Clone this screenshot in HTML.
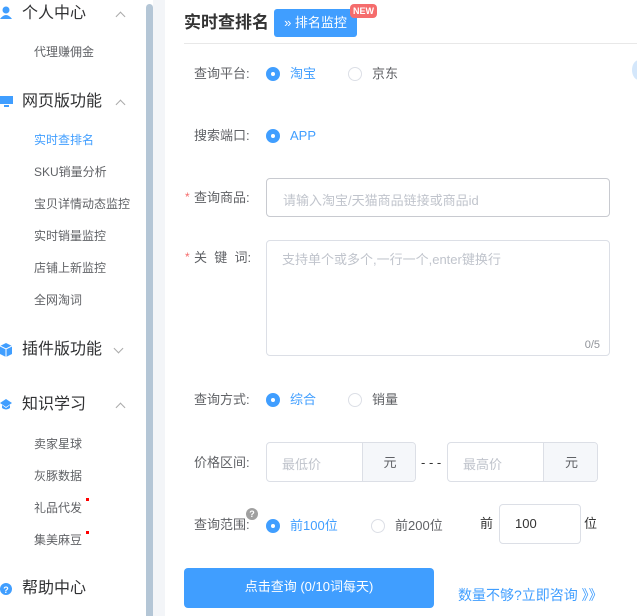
<!DOCTYPE html>
<html><head><meta charset="utf-8"><style>
*{margin:0;padding:0;box-sizing:border-box}
body{width:637px;height:616px;overflow:hidden;background:#fff;font-family:"Liberation Sans","Noto Sans CJK SC",sans-serif;position:relative}
.a{position:absolute;white-space:nowrap}
.g{font-size:16px;color:#303133;line-height:20px}
.s{font-size:12px;color:#606266;line-height:16px;left:34px}
.chev{position:absolute;width:7px;height:7px;border-left:1px solid #aaa;border-top:1px solid #aaa;transform:rotate(45deg)}
.chd{transform:rotate(225deg)}
.lb{font-size:13px;color:#606266;line-height:16px;left:194px}
.r{position:absolute;width:14px;height:14px;border-radius:50%;border:1px solid #dcdfe6;background:#fff}
.r.on{background:#409eff;border-color:#409eff}
.r.on:after{content:"";position:absolute;left:4px;top:4px;width:4px;height:4px;border-radius:50%;background:#fff}
.t{font-size:13px;line-height:16px;color:#606266}
.b{color:#409eff}
.box{position:absolute;border:1px solid #dcdfe6;border-radius:4px;background:#fff}
.ph{font-size:13px;color:#c0c4cc}
.st{color:#f56c6c;font-size:12px;left:185px}
</style></head><body>
<div class="a" style="left:146px;top:4px;width:7px;height:612px;background:#b4c6d6;border-radius:4px 4px 0 0"></div>
<div class="a" style="left:153px;top:0;width:12px;height:616px;background:#f3f5f8"></div>

<svg class="a" style="left:0;top:6px" width="12" height="14"><circle cx="6" cy="4" r="3.5" fill="#409eff"/><path d="M0 13 Q6 5 12 13Z" fill="#409eff"/></svg>
<div class="a g" style="left:22px;top:4px">个人中心</div><div class="chev" style="left:117px;top:13px"></div>
<div class="a s" style="top:44px">代理赚佣金</div>

<svg class="a" style="left:0;top:95px" width="13" height="13"><rect x="0" y="1" width="13" height="8" fill="#409eff"/><rect x="4" y="10" width="5" height="2" fill="#409eff"/></svg>
<div class="a g" style="left:22px;top:92px">网页版功能</div><div class="chev" style="left:117px;top:101px"></div>
<div class="a s" style="top:132px;color:#409eff">实时查排名</div>
<div class="a s" style="top:164px">SKU销量分析</div>
<div class="a s" style="top:196px">宝贝详情动态监控</div>
<div class="a s" style="top:228px">实时销量监控</div>
<div class="a s" style="top:260px">店铺上新监控</div>
<div class="a s" style="top:292px">全网淘词</div>

<svg class="a" style="left:0;top:343px" width="12" height="14"><path d="M6 0 L12 3 L12 11 L6 14 L0 11 L0 3Z" fill="#409eff"/><path d="M0 3 L6 6 L12 3 M6 6 V14" stroke="#fff" stroke-width="1" fill="none"/></svg>
<div class="a g" style="left:22px;top:340px">插件版功能</div><div class="chev chd" style="left:115px;top:345px"></div>

<svg class="a" style="left:0;top:399px" width="12" height="12"><path d="M6 0 L12 4 L6 8 L0 4Z" fill="#409eff"/><path d="M2 6 V9 Q6 12 10 9 V6 L6 9 Z" fill="#409eff"/></svg>
<div class="a g" style="left:22px;top:395px">知识学习</div><div class="chev" style="left:117px;top:404px"></div>
<div class="a s" style="top:436px">卖家星球</div>
<div class="a s" style="top:468px">灰豚数据</div>
<div class="a s" style="top:500px">礼品代发</div><div class="a" style="left:86px;top:498px;width:3px;height:3px;background:#f00"></div>
<div class="a s" style="top:532px">集美麻豆</div><div class="a" style="left:86px;top:531px;width:3px;height:3px;background:#f00"></div>

<svg class="a" style="left:0;top:583px" width="12" height="12"><circle cx="6" cy="6" r="6" fill="#409eff"/><text x="6" y="10" font-size="9" fill="#fff" text-anchor="middle" font-family="Liberation Sans" font-weight="bold">?</text></svg>
<div class="a g" style="left:22px;top:579px">帮助中心</div>

<div class="a" style="left:184px;top:12px;font-size:17px;font-weight:bold;color:#333;line-height:22px">实时查排名</div>
<div class="a" style="left:274px;top:9px;width:83px;height:28px;background:#409eff;border-radius:3px;color:#fff;font-size:13px;line-height:28px;text-align:center">» 排名监控</div>
<div class="a" style="left:350px;top:4px;width:27px;height:14px;background:#f56c6c;border-radius:4px;color:#fff;font-size:9px;font-weight:bold;line-height:14px;text-align:center">NEW</div>
<div class="a" style="left:184px;top:43px;width:453px;height:1px;background:#e8e8e8"></div>
<div class="a" style="left:632px;top:60px;width:14px;height:20px;border-radius:50%;background:#d4e7fb"></div>

<div class="a lb" style="top:66px">查询平台:</div>
<div class="r on" style="left:266px;top:67px"></div><div class="a t b" style="left:290px;top:66px">淘宝</div>
<div class="r" style="left:348px;top:67px"></div><div class="a t" style="left:372px;top:66px">京东</div>

<div class="a lb" style="top:128px">搜索端口:</div>
<div class="r on" style="left:266px;top:129px"></div><div class="a t b" style="left:290px;top:128px">APP</div>

<div class="a st" style="top:190px">*</div>
<div class="a lb" style="top:190px">查询商品:</div>
<div class="box" style="left:266px;top:178px;width:344px;height:39px;border-color:#c8cad0"><div class="a ph" style="left:16px;top:11px">请输入淘宝/天猫商品链接或商品id</div></div>

<div class="a st" style="top:250px">*</div>
<div class="a lb" style="top:250px">关&nbsp;&nbsp;键&nbsp;&nbsp;词:</div>
<div class="box" style="left:266px;top:240px;width:344px;height:116px"><div class="a ph" style="left:15px;top:8px">支持单个或多个,一行一个,enter键换行</div><div class="a" style="right:9px;bottom:4px;font-size:11px;color:#909399">0/5</div></div>

<div class="a lb" style="top:392px">查询方式:</div>
<div class="r on" style="left:266px;top:393px"></div><div class="a t b" style="left:290px;top:392px">综合</div>
<div class="r" style="left:348px;top:393px"></div><div class="a t" style="left:372px;top:392px">销量</div>

<div class="a lb" style="top:455px">价格区间:</div>
<div class="box" style="left:266px;top:442px;width:150px;height:40px;overflow:hidden"><div class="a ph" style="left:15px;top:11px">最低价</div><div class="a" style="left:95px;top:0;width:55px;height:40px;background:#f5f7fa;border-left:1px solid #dcdfe6;font-size:13px;color:#606266;text-align:center;line-height:40px">元</div></div>
<div class="a t" style="left:421px;top:455px;color:#333">- - -</div>
<div class="box" style="left:447px;top:442px;width:151px;height:40px;overflow:hidden"><div class="a ph" style="left:15px;top:11px">最高价</div><div class="a" style="left:95px;top:0;width:56px;height:40px;background:#f5f7fa;border-left:1px solid #dcdfe6;font-size:13px;color:#606266;text-align:center;line-height:40px">元</div></div>

<div class="a lb" style="top:517px">查询范围:</div>
<div class="a" style="left:246px;top:508px;width:12px;height:12px;border-radius:50%;background:#a0a0a0;color:#fff;font-size:9px;font-weight:bold;text-align:center;line-height:12px">?</div>
<div class="r on" style="left:266px;top:519px"></div><div class="a t b" style="left:290px;top:518px">前100位</div>
<div class="r" style="left:371px;top:519px"></div><div class="a t" style="left:395px;top:518px">前200位</div>
<div class="a t" style="left:480px;top:516px;color:#333">前</div>
<div class="box" style="left:499px;top:504px;width:82px;height:40px"><div class="a t" style="left:15px;top:11px;color:#333">100</div></div>
<div class="a t" style="left:584px;top:516px;color:#333">位</div>

<div class="a" style="left:184px;top:568px;width:250px;height:40px;background:#409eff;border-radius:4px;color:#fff;font-size:13px;text-align:center;line-height:38px">点击查询 (0/10词每天)</div>
<div class="a" style="left:458px;top:586px;font-size:14px;color:#409eff;line-height:18px">数量不够?立即咨询 》》</div>
</body></html>
